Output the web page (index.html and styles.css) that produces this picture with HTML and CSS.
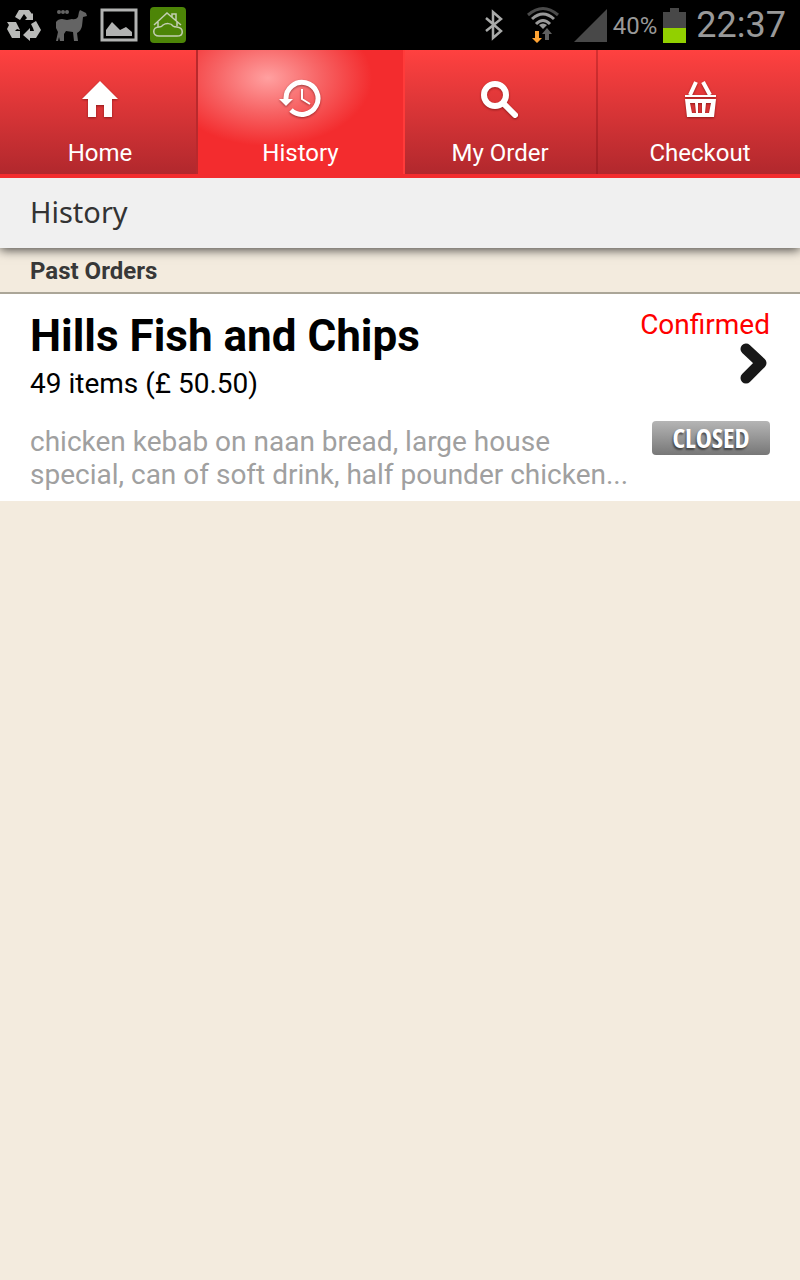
FILE: index.html
```html
<!DOCTYPE html>
<html lang="en">
<head>
    <meta charset="UTF-8">
    <meta name="viewport" content="width=device-width, initial-scale=1">
    <title>History</title>
    <link rel="stylesheet" href="styles.css">
</head>
<body>
<div class="statusbar">
    <div class="status-left">
        <!-- recycle -->
        <svg width="36" height="36" viewBox="0 0 36 36" fill="#b9bab8">
            <path d="M13 3h10l3 4 1-1v7h-8l2-2-3-4-4 6-5-3z"/>
            <path d="M1 15h9l4 8-3-1-2 2h5v7H6l-5-9 2-4z"/>
            <path d="M25 17l5-3 5 9-5 8h-6v3l-7-6 7-7v3h4l-1-3z"/>
        </svg>
        <!-- llama -->
        <svg width="34" height="34" viewBox="0 0 34 34" fill="#646464">
            <circle cx="5" cy="4" r="2"/><circle cx="9" cy="4" r="2"/><circle cx="13" cy="4" r="2"/>
            <path d="M2 14q2-3 6-3l5 1 5-1q4 1 6-2l1-5 1-2 2 1 4 2 1 3-4 1-1 9q-1 5-5 7l1 8h-4l-1-9-7-1-2 3v7H6l-1-4-1 4H2l2-9-2-4z"/>
        </svg>
        <!-- picture -->
        <svg width="38" height="34" viewBox="0 0 38 34">
            <path d="M2 2h34v30H2z" fill="none" stroke="#b2b3b2" stroke-width="3"/>
            <path d="M6 28v-6l6-8 8 8 6-3 6 5v4z" fill="#b2b3b2"/>
        </svg>
        <!-- house on a cloud -->
        <svg width="36" height="36" viewBox="0 0 36 36">
            <rect width="36" height="36" rx="4" fill="#4d8507"/>
            <g fill="none" stroke="#c3cfb3" stroke-width="1.500">
                <path d="M4 18L17 6l14 12M22 10V7h4v7M8 15v5M27 15v4"/>
                <path d="M9 29c-7 0-7-9 0-9 3 0 3-1 4-2 3-2 8-2 10 1 1 1 2 1 4 1 7 1 7 9 0 9z"/>
            </g>
        </svg>
    </div>
    <div class="status-right">
        <!-- bluetooth -->
        <svg width="18" height="32" viewBox="0 0 18 32" fill="none" stroke="#a9aaa9" stroke-width="2.500">
            <path d="M1 9l15 13-8 7V3l8 7L1 22"/>
        </svg>
        <!-- wifi with traffic arrows -->
        <svg class="wifi" width="32" height="38" viewBox="0 0 32 38">
            <g fill="none" stroke-width="4">
                <path d="M1 9Q16-4 31 9" stroke="#4a4a4a" stroke-width="3"/>
                <path d="M5 13Q16 3 27 13M9 18Q16 11 23 18" stroke="#999" stroke-width="3"/>
            </g>
            <path d="M12 19q4-3 8 0l-4 4z" fill="#999"/>
            <path d="M8 25h4v7h3l-5 5-5-5h3z" fill="#ffa333"/>
            <path d="M18 34h4v-6h3l-5-6-5 6h3z" fill="#606060"/>
        </svg>
        <svg class="signal" width="33" height="33" viewBox="0 0 33 33"><path d="M33 0v33H0z" fill="#484848"/></svg>
        <span class="percent">40%</span>
        <svg class="battery" width="23" height="35" viewBox="0 0 23 35">
            <path d="M7 0h9v4h7v31H0V4h7z" fill="#484848"/>
            <path d="M0 20h23v15H0z" fill="#92d000"/>
        </svg>
        <span class="clock">22:37</span>
    </div>
</div>

<nav class="tabs">
    <a class="tab" href="#home">
        <svg width="40" height="40" viewBox="0 0 40 40"><path d="M20 2l18 18h-6v18h-8V26h-8v12H8V20H2z" fill="#fff"/></svg>
        <span>Home</span>
    </a>
    <a class="tab active" href="#history">
        <svg width="44" height="40" viewBox="0 0 44 40">
            <path d="M7 20A16 16 0 1 1 12 31" fill="none" stroke="#fff" stroke-width="5"/>
            <path d="M0 20h14l-7 7z" fill="#fff"/>
            <path d="M23 10v10l8 5" fill="none" stroke="#fff" stroke-width="2"/>
        </svg>
        <span>History</span>
    </a>
    <a class="tab order-tab" href="#order">
        <svg width="40" height="40" viewBox="0 0 40 40" fill="none" stroke="#fff">
            <circle cx="15" cy="16" r="11" stroke-width="6"/>
            <path d="M24 25l11 11" stroke-width="6" stroke-linecap="round"/>
        </svg>
        <span>My Order</span>
    </a>
    <a class="tab" href="#checkout">
        <svg width="40" height="40" viewBox="0 0 40 40">
            <path d="M10 16L16 3M30 16L23 3" stroke="#fff" stroke-width="4"/>
            <path d="M5 16h31v2H5z" fill="#fff"/>
            <path fill="#fff" fill-rule="evenodd" d="M5 20h31l-2 18H7zM10 24l2 10h4l-1-10zM18 24v10h4V24zM26 24l-1 10h4l2-10z"/>
        </svg>
        <span>Checkout</span>
    </a>
</nav>

<header class="page-header">
    <h1>History</h1>
</header>

<main>
    <h2 class="section-title">Past Orders</h2>
    <a class="order" href="#order-details">
        <div class="order-top">
            <div>
                <h3>Hills Fish and Chips</h3>
                <p class="total">49 items (£ 50.50)</p>
            </div>
            <div class="order-status">
                <span>Confirmed</span>
                <svg width="32" height="44" viewBox="0 0 32 44"><path d="M8 8l15 14L8 37" fill="none" stroke="#181818" stroke-width="11" stroke-linecap="round" stroke-linejoin="round"/></svg>
            </div>
        </div>
        <div class="order-bottom">
            <p class="summary">chicken kebab on naan bread, large house special, can of soft drink, half pounder chicken...</p>
            <span class="closed">CLOSED</span>
        </div>
    </a>
</main>
</body>
</html>
```
FILE: styles.css
```css
* {
    box-sizing: border-box;
}
body {
    margin: 0;
    min-height: 100vh;
    background-color: #f3ebde;
    font-family: Roboto, sans-serif;
    color: #000;
}
h1, h2, h3, p {
    margin: 0;
}
a {
    color: inherit;
    text-decoration: none;
}
svg {
    display: block;
    flex-shrink: 0;
}

/* phone status bar */
.statusbar {
    display: flex;
    justify-content: space-between;
    height: 50px;
    padding: 0 14px 0 6px;
    background-color: #000;
    color: #999;
}
.status-left, .status-right {
    display: flex;
    align-items: center;
}
.status-left {
    gap: 12px;
}
.wifi {
    margin: 0 15px 0 24px;
}
.percent {
    margin: 2px 6px 0;
    font-size: 24px;
}
.battery {
    margin-right: 10px;
}
.clock {
    font-size: 36px;
}

/* tabs */
.tabs {
    position: relative;
    z-index: 1;
    display: grid;
    grid-template-columns: repeat(4, 1fr);
    height: 128px;
    border-bottom: 4px solid #f32c2e;
    background: linear-gradient(#ff4140, #b1282d);
}
.tab {
    display: flex;
    flex-direction: column;
    align-items: center;
    gap: 18px;
    padding-top: 29px;
    color: #fff;
    font-size: 24px;
    line-height: 32px;
}
.tab svg {
    filter: drop-shadow(0 1px 1px rgba(70, 0, 0, 0.5));
}
.tab.active {
    margin: 0 -5px 0 -4px;
    border-left: 2px solid #b9292c;
    border-right: 2px solid #ff3b3a;
    background: radial-gradient(ellipse 104px 68px at 70px 28px, #ffa0a0, #f76465 50%, #f32c2e) #f32c2e;
}
.tab.order-tab {
    margin-right: 2px;
    padding-left: 4px;
    border-right: 2px solid rgba(120, 10, 15, 0.3);
}

.page-header {
    position: relative;
    padding: 13px 30px 15px;
    background-color: #f0f0f0;
    box-shadow: 0 2px 10px rgba(0, 0, 0, 0.7);
}
.page-header h1 {
    font-family: "Noto Sans", sans-serif;
    font-size: 29px;
    font-weight: 400;
    line-height: 42px;
    color: #333;
}
.section-title {
    padding: 7px 30px 5px;
    border-bottom: 2px solid #aba698;
    font-size: 24px;
    line-height: 32px;
    color: #383838;
}

/* order row */
.order {
    display: block;
    padding: 14px 30px 10px;
    background-color: #fff;
    font-size: 28px;
    line-height: 33px;
}
.order-top, .order-bottom {
    display: flex;
    justify-content: space-between;
}
.order h3 {
    margin-bottom: 3px;
    font-size: 44px;
    line-height: 56px;
}
.order-status {
    display: flex;
    flex-direction: column;
    align-items: flex-end;
    color: #f00;
}
.order-bottom {
    gap: 10px;
    margin-top: 25px;
}
.summary {
    color: #a0a0a0;
}
.closed {
    flex-shrink: 0;
    width: 118px;
    height: 34px;
    margin-top: -4px;
    border-radius: 4px;
    background: linear-gradient(#b5b5b5, #777);
    color: #fff;
    font-family: "Open Sans Condensed", "Liberation Sans Narrow", Roboto, sans-serif;
    font-size: 27px;
    font-weight: 700;
    line-height: 34px;
    text-align: center;
    text-shadow: -1px 2px 2px rgba(0, 0, 0, 0.5);
}
```
